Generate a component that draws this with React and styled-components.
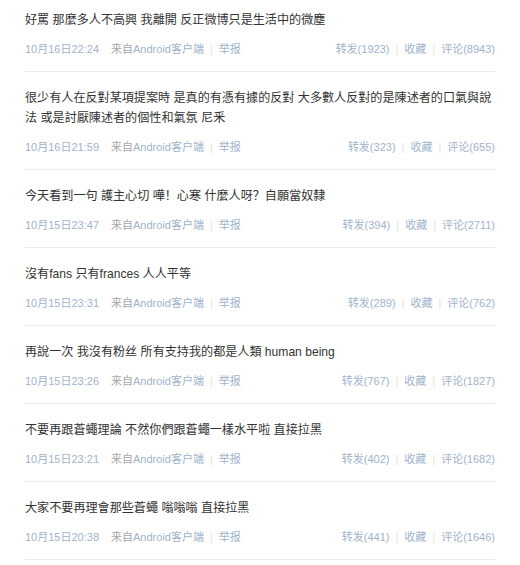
import React from "react";
import styled, { createGlobalStyle } from "styled-components";

const GlobalStyle = createGlobalStyle`
    html, body {
        margin: 0;
        padding: 0;
        background: #fff;
    }
    body {
        font-family: "Liberation Sans", Arial, "Noto Sans CJK SC", sans-serif;
    }
`;

const posts = [
    {
        text: "好罵 那麼多人不高興 我離開 反正微博只是生活中的微塵",
        time: "10月16日22:24",
        forward: 1923,
        comment: 8943,
    },
    {
        text: "很少有人在反對某項提案時 是真的有憑有據的反對 大多數人反對的是陳述者的口氣與說法 或是討厭陳述者的個性和氣氛 尼釆",
        time: "10月16日21:59",
        forward: 323,
        comment: 655,
    },
    {
        text: "今天看到一句 護主心切 嘩！心寒 什麼人呀？自願當奴隸",
        time: "10月15日23:47",
        forward: 394,
        comment: 2711,
    },
    {
        text: "沒有fans 只有frances 人人平等",
        time: "10月15日23:31",
        forward: 289,
        comment: 762,
    },
    {
        text: "再說一次 我沒有粉丝 所有支持我的都是人類 human being",
        time: "10月15日23:26",
        forward: 767,
        comment: 1827,
    },
    {
        text: "不要再跟蒼蠅理論 不然你們跟蒼蠅一樣水平啦 直接拉黑",
        time: "10月15日23:21",
        forward: 402,
        comment: 1682,
    },
    {
        text: "大家不要再理會那些蒼蠅 嗡嗡嗡 直接拉黑",
        time: "10月15日20:38",
        forward: 441,
        comment: 1646,
    },
];

const Feed = styled.ul`
    list-style: none;
    margin: 0;
    padding: 0 25px;
`;

const Item = styled.li`
    padding: 16px 0 14px;
    border-bottom: 1px solid #ebebeb;

    &:first-child {
        padding-top: 10px;
    }
`;

const Text = styled.p`
    margin: 0;
    font-size: 12.1px;
    line-height: 20px;
    color: #333;
    word-break: break-all;
`;

const Meta = styled.div`
    margin-top: 11px;
    display: flex;
    justify-content: space-between;
    align-items: center;
    font-size: 11px;
    line-height: 16px;
    white-space: nowrap;
`;

const Group = styled.div`
    display: flex;
    align-items: center;
`;

const Link = styled.a`
    color: #9fb3cc;
    text-decoration: none;
    cursor: pointer;
`;

const Time = styled(Link)`
    margin-right: 12px;
`;

const Source = styled.span`
    color: #a8a8a8;
`;

const Sep = styled.span`
    color: #e2e2e2;
    margin: 0 6px;
`;

const Post = ({ post }) => (
    <Item>
        <Text>{post.text}</Text>
        <Meta>
            <Group>
                <Time>{post.time}</Time>
                <Source>
                    来自<Link>Android客户端</Link>
                </Source>
                <Sep>|</Sep>
                <Link>举报</Link>
            </Group>
            <Group>
                <Link>转发({post.forward})</Link>
                <Sep>|</Sep>
                <Link>收藏</Link>
                <Sep>|</Sep>
                <Link>评论({post.comment})</Link>
            </Group>
        </Meta>
    </Item>
);

const App = () => (
    <>
        <GlobalStyle />
        <Feed>
            {posts.map((post, index) => (
                <Post key={index} post={post} />
            ))}
        </Feed>
    </>
);

export default App;
